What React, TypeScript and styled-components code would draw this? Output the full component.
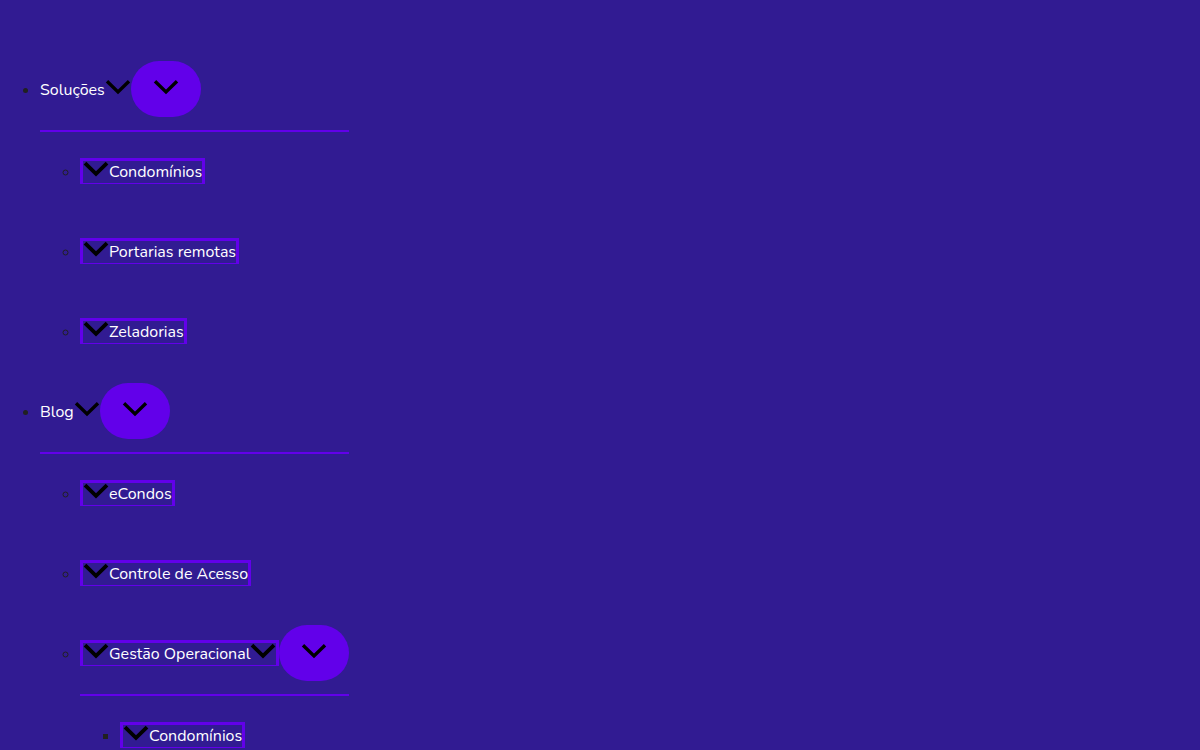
import React from 'react';
import styled, { createGlobalStyle, css } from 'styled-components';

const GlobalStyle = createGlobalStyle`
  *, *::before, *::after { box-sizing: border-box; }
  html { background: #311b92; }
  body { margin: 0; }
`;

const Nav = styled.nav`
  min-height: 100vh;
  padding-top: 50px;
  background: #311b92;
  color: #212121;
  font: 16px/26px Nunito, 'Noto Sans', sans-serif;
`;

const Menu = styled.ul<{ $marker: string }>`
  width: fit-content;
  margin: 0;
  padding: 0 0 0 40px;
  list-style: ${(p) => p.$marker} outside;
`;

const SubMenu = styled(Menu)`
  width: auto;
  border-top: 2px solid #6200ea;
  padding-left: 0;
`;

const Item = styled.li<{ $nested: boolean }>`
  ${(p) => p.$nested && css`margin-left: 40px;`}
`;

const Row = styled.span<{ $toggle: boolean }>`
  display: inline-flex;
  align-items: center;
  vertical-align: baseline;
  padding: ${(p) => (p.$toggle ? '11px 0 13px' : '26px 0 28px')};
`;

const Link = styled.a<{ $boxed: boolean }>`
  display: block;
  height: 26px;
  color: #fff;
  text-decoration: none;
  white-space: nowrap;
  ${(p) =>
    p.$boxed
      ? css`
          border: 3px solid #6200ea;
          border-bottom-width: 1px;
          line-height: 22px;
        `
      : css`
          padding-top: 2px;
          line-height: 24px;
        `}
`;

const Toggle = styled.button`
  display: flex;
  align-items: center;
  justify-content: center;
  width: 70px;
  height: 56px;
  padding: 0 0 4px;
  border: 0;
  border-radius: 28px;
  background: #6200ea;
  cursor: pointer;
`;

const Icon = styled.svg`
  width: 26px;
  height: 16px;
  vertical-align: baseline;
`;

const Chevron = ({ bold = false }: { bold?: boolean }) => (
  <Icon viewBox="0 0 26 16" aria-hidden="true">
    <path
      d="M2 2.2 13 12.9 24 2.2"
      fill="none"
      stroke="#000"
      strokeWidth={bold ? 3.8 : 3.4}
    />
  </Icon>
);

type Entry = { label: string; children?: Entry[] };

const entries: Entry[] = [
  {
    label: 'Soluções',
    children: [{ label: 'Condomínios' }, { label: 'Portarias remotas' }, { label: 'Zeladorias' }],
  },
  {
    label: 'Blog',
    children: [
      { label: 'eCondos' },
      { label: 'Controle de Acesso' },
      { label: 'Gestão Operacional', children: [{ label: 'Condomínios' }] },
    ],
  },
];

const markers = ['disc', 'circle', 'square'];

function MenuItem({ entry, level }: { entry: Entry; level: number }) {
  const nested = level > 0;
  const hasChildren = Boolean(entry.children);
  return (
    <Item $nested={nested}>
      <Row $toggle={hasChildren}>
        <Link href="#" $boxed={nested}>
          {nested && <Chevron bold />}
          {entry.label}
          {hasChildren && <Chevron bold={nested} />}
        </Link>
        {hasChildren && (
          <Toggle type="button" aria-label={`Alternar menu ${entry.label}`}>
            <Chevron />
          </Toggle>
        )}
      </Row>
      {entry.children && (
        <SubMenu $marker={markers[level + 1]}>
          {entry.children.map((child) => (
            <MenuItem key={child.label} entry={child} level={level + 1} />
          ))}
        </SubMenu>
      )}
    </Item>
  );
}

export default function App() {
  return (
    <>
      <GlobalStyle />
      <Nav aria-label="Menu principal">
        <Menu $marker={markers[0]}>
          {entries.map((entry) => (
            <MenuItem key={entry.label} entry={entry} level={0} />
          ))}
        </Menu>
      </Nav>
    </>
  );
}
